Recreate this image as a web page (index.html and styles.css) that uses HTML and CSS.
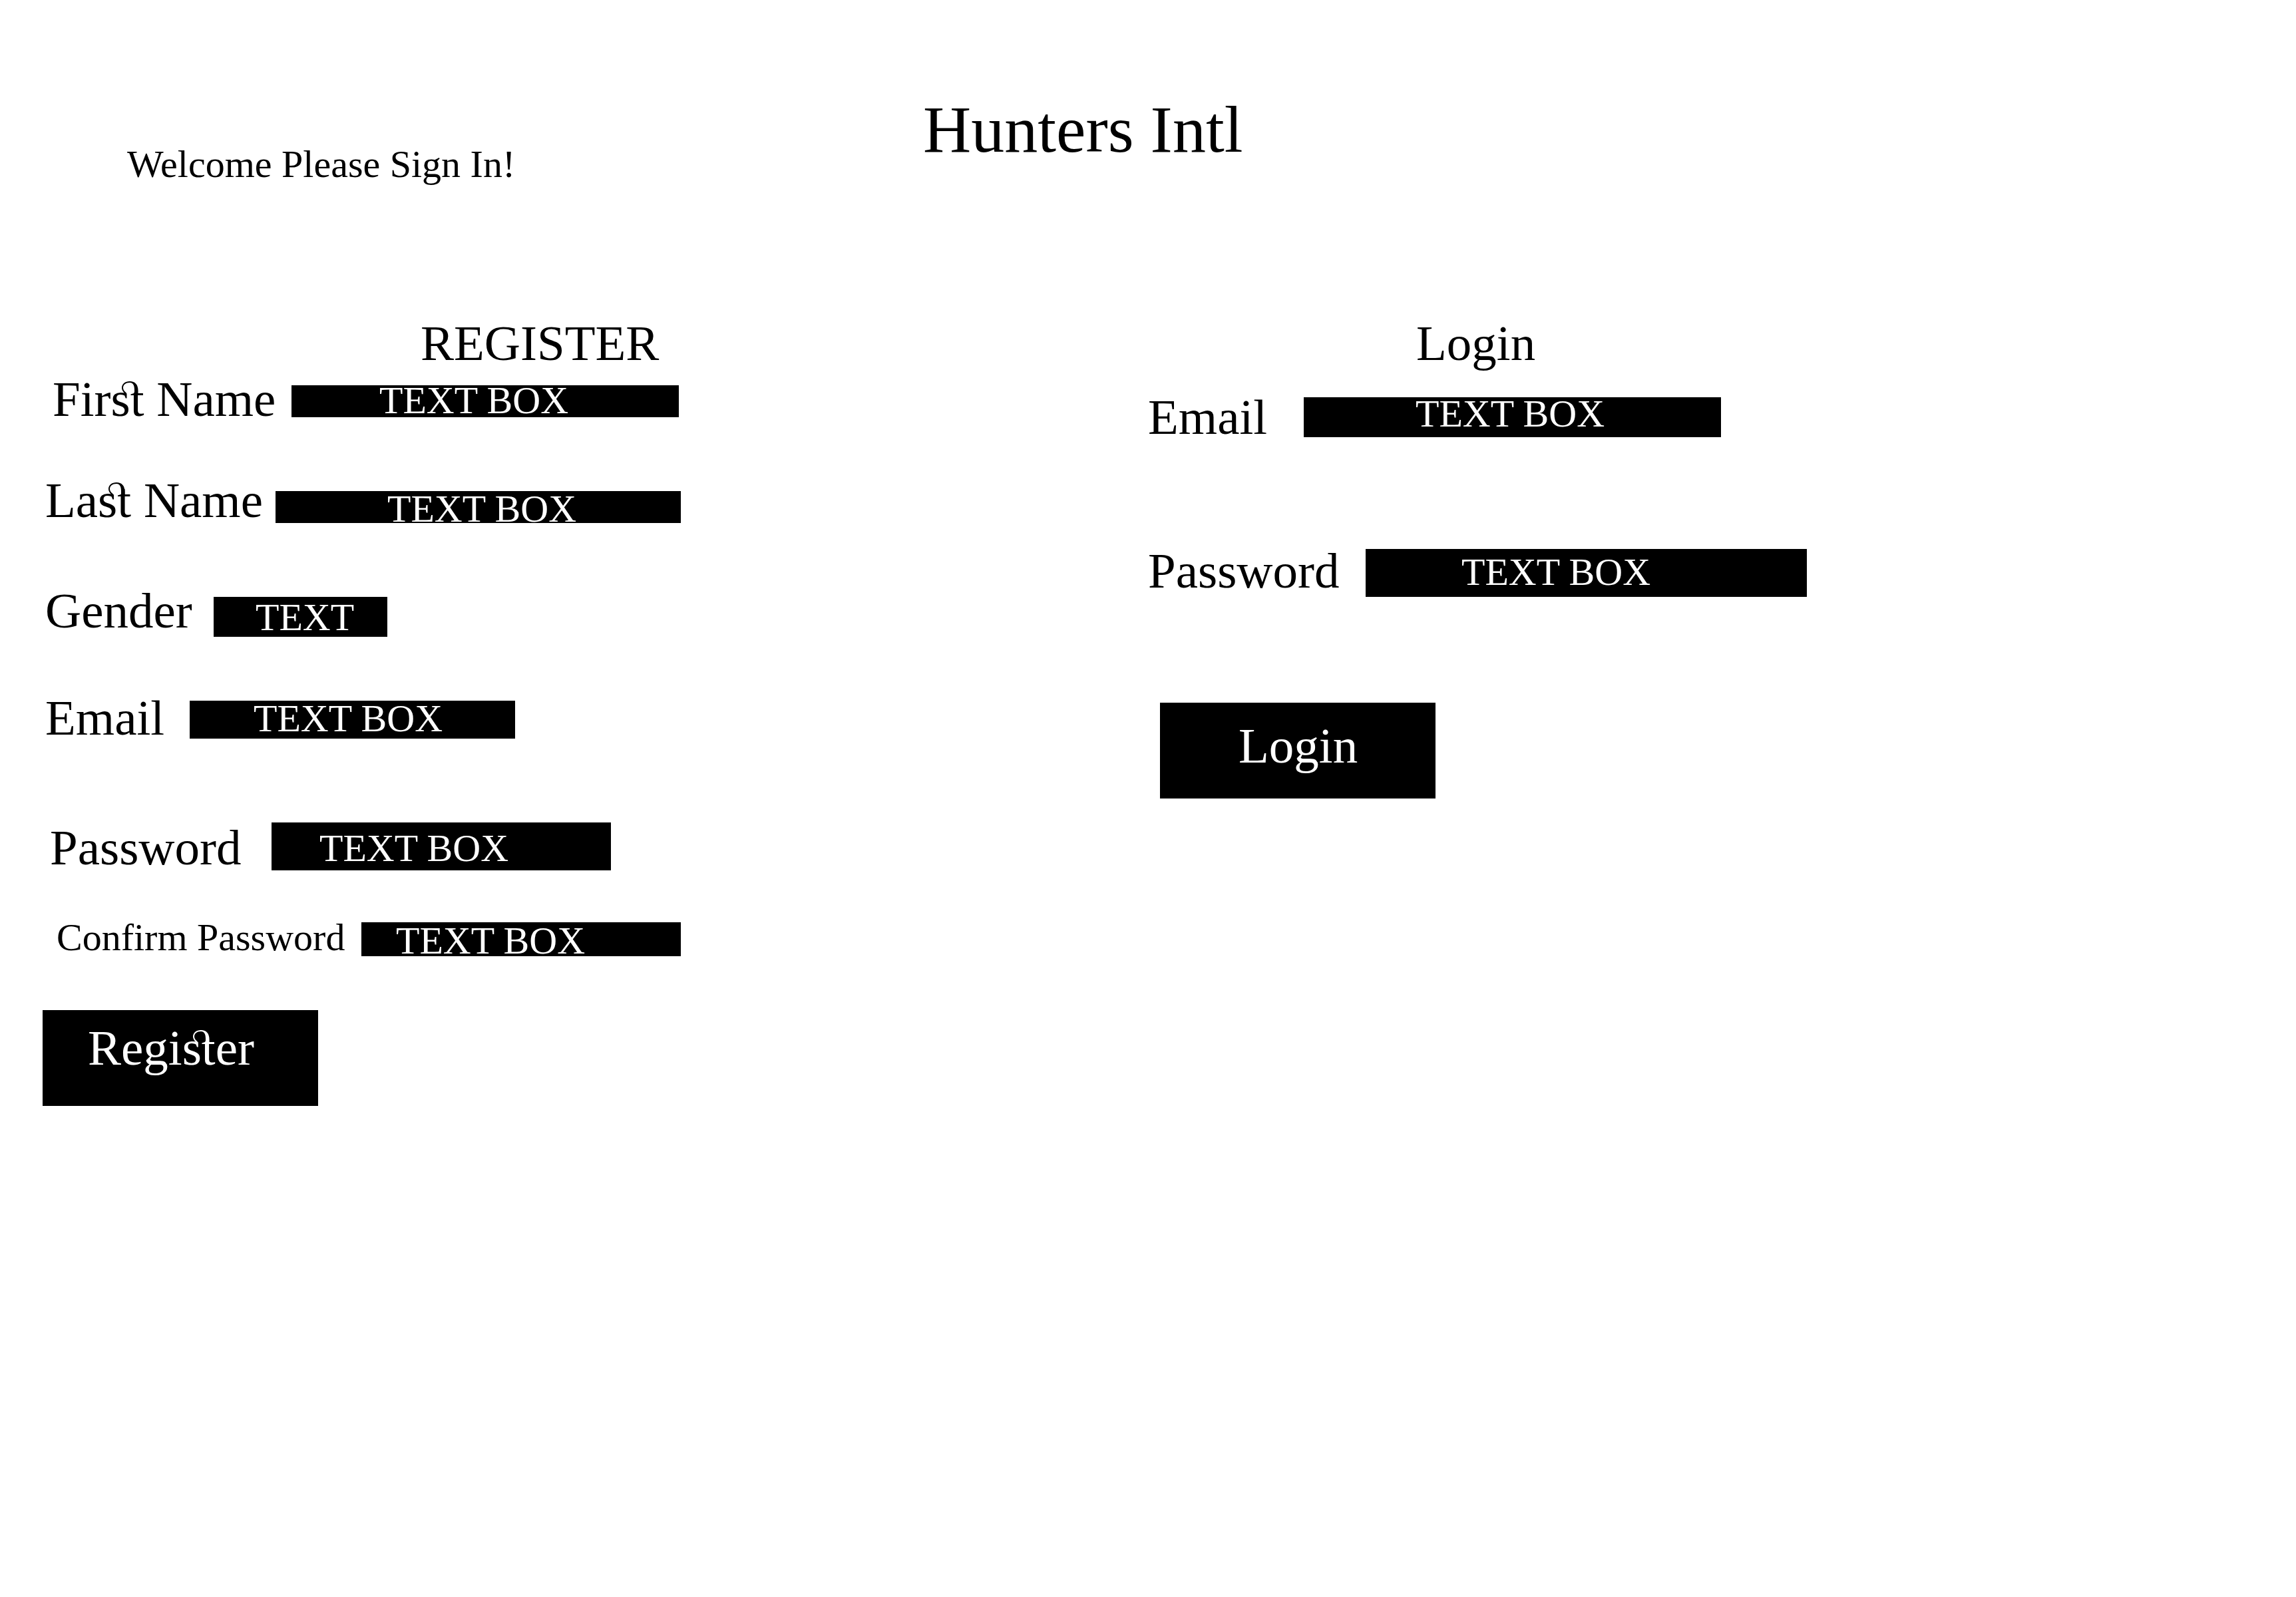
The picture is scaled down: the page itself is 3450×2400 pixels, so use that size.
FILE: index.html
```html
<!DOCTYPE html>
<html lang="en">
<head>
<meta charset="utf-8">
<title>Hunters Intl</title>
<link rel="stylesheet" href="styles.css">
</head>
<body>
<header class="header">
  <p class="welcome">Welcome Please Sign In!</p>
  <h1 class="brand">Hunters Intl</h1>
</header>
<main class="forms">
  <form class="form register">
    <h2 class="form-title">REGISTER</h2>
    <div class="row first-name">
      <label for="first-name">Fir<span class="st">st<svg class="loop" viewBox="0 0 45 40" aria-hidden="true"><path d="M21 34C18 31 16 28 16 25C16 19 21 15 28 15C36 15 40.500 20 40.500 29V35H35V28C35 21 33 17 28 17C22 17 18 20 18 25C18 28 20 30 23 32.500Z"/></svg></span> Name</label>
      <input id="first-name" class="raised" type="text" value="TEXT BOX">
    </div>
    <div class="row last-name">
      <label for="last-name">La<span class="st">st<svg class="loop" viewBox="0 0 45 40" aria-hidden="true"><path d="M21 34C18 31 16 28 16 25C16 19 21 15 28 15C36 15 40.500 20 40.500 29V35H35V28C35 21 33 17 28 17C22 17 18 20 18 25C18 28 20 30 23 32.500Z"/></svg></span> Name</label>
      <input id="last-name" class="lowered" type="text" value="TEXT BOX">
    </div>
    <div class="row gender">
      <label for="gender">Gender</label>
      <input id="gender" type="text" value="TEXT">
    </div>
    <div class="row email">
      <label for="email">Email</label>
      <input id="email" class="raised" type="text" value="TEXT BOX">
    </div>
    <div class="row password">
      <label for="password">Password</label>
      <input id="password" class="lowered" type="text" value="TEXT BOX">
    </div>
    <div class="row confirm">
      <label for="confirm">Confirm Password</label>
      <input id="confirm" class="lowered" type="text" value="TEXT BOX">
    </div>
    <button class="submit" type="button">Regi<span class="st">st<svg class="loop" viewBox="0 0 45 40" aria-hidden="true"><path d="M21 34C18 31 16 28 16 25C16 19 21 15 28 15C36 15 40.500 20 40.500 29V35H35V28C35 21 33 17 28 17C22 17 18 20 18 25C18 28 20 30 23 32.500Z"/></svg></span>er</button>
  </form>
  <form class="form login">
    <h2 class="form-title">Login</h2>
    <div class="row login-email">
      <label for="login-email">Email</label>
      <input id="login-email" class="top" type="text" value="TEXT BOX">
    </div>
    <div class="row login-password">
      <label for="login-password">Password</label>
      <input id="login-password" class="raised" type="text" value="TEXT BOX">
    </div>
    <button class="submit" type="button">Login</button>
  </form>
</main>
</body>
</html>
```
FILE: styles.css
```css
* { box-sizing: border-box; }

body {
  margin: 0;
  background: #fff;
  color: #000;
  font-family: "Liberation Serif", "Times New Roman", serif;
  font-size: 75px;
  line-height: 84px;
}

h1, h2, p { margin: 0; font-weight: 400; }

.header {
  display: grid;
  grid-template-columns: 40% 1fr;
  padding: 139px 0 195px;
}

.welcome {
  padding: 76px 0 0 191px;
  font-size: 58px;
  line-height: 64px;
  white-space: nowrap;
}

.brand {
  padding-left: 7px;
  font-size: 100px;
  line-height: 112px;
}

.forms {
  display: grid;
  grid-template-columns: 1fr 1fr;
}

.form {
  display: flex;
  flex-direction: column;
  align-items: flex-start;
}

.form-title { font-size: 75px; }
.register .form-title { padding-left: 632px; }
.login .form-title { padding-left: 403px; }

.row {
  display: flex;
  align-items: flex-start;
}

.row label {
  flex: none;
  white-space: nowrap;
}

.row input {
  margin: 0;
  padding: 0;
  border: 0;
  border-radius: 0;
  background: #000;
  color: #fff;
  font: 58px/48px "Liberation Serif", "Times New Roman", serif;
}

.row .raised { padding-bottom: 4px; }
.row .lowered { padding-top: 4px; }
.row .top { padding-bottom: 12px; }

.first-name { padding-left: 79px; }
.first-name label { width: 359px; }
.first-name input { width: 582px; height: 48px; margin-top: 21px; padding-left: 132px; }

.last-name { padding-left: 68px; margin-top: 68px; }
.last-name label { width: 346px; }
.last-name input { width: 609px; height: 48px; margin-top: 28px; padding-left: 168px; }

.gender { padding-left: 68px; margin-top: 82px; }
.gender label { width: 253px; }
.gender input { width: 261px; height: 60px; margin-top: 21px; padding-left: 63px; }

.email { padding-left: 68px; margin-top: 77px; }
.email label { width: 217px; }
.email input { width: 489px; height: 57px; margin-top: 16px; padding-left: 96px; }

.password { padding-left: 75px; margin-top: 111px; }
.password label { width: 333px; }
.password input { width: 510px; height: 72px; margin-top: 4px; padding-left: 72px; }

.confirm { padding-left: 85px; margin-top: 61px; }
.confirm label { width: 458px; font-size: 58px; line-height: 64px; }
.confirm input { width: 480px; height: 51px; margin-top: 9px; padding-left: 52px; }

.login-email { margin-top: 27px; }
.login-email label { width: 234px; }
.login-email input { width: 627px; height: 60px; margin-top: 12px; padding-left: 168px; }

.login-password { margin-top: 147px; }
.login-password label { width: 327px; }
.login-password input { width: 663px; height: 72px; margin-top: 9px; padding-left: 144px; }

.submit {
  width: 414px;
  height: 144px;
  border: 0;
  border-radius: 0;
  background: #000;
  color: #fff;
  font: inherit;
  text-align: left;
}

.register .submit { margin: 77px 0 0 64px; padding: 15px 0 45px 68px; }
.login .submit { margin: 156px 0 0 18px; padding: 23px 0 37px 118px; }

/* Decorative loop joining the letters s and t */
.st { position: relative; }

.loop {
  position: absolute;
  top: 0;
  left: 0;
  width: 45px;
  height: 40px;
  fill: currentColor;
}
```
